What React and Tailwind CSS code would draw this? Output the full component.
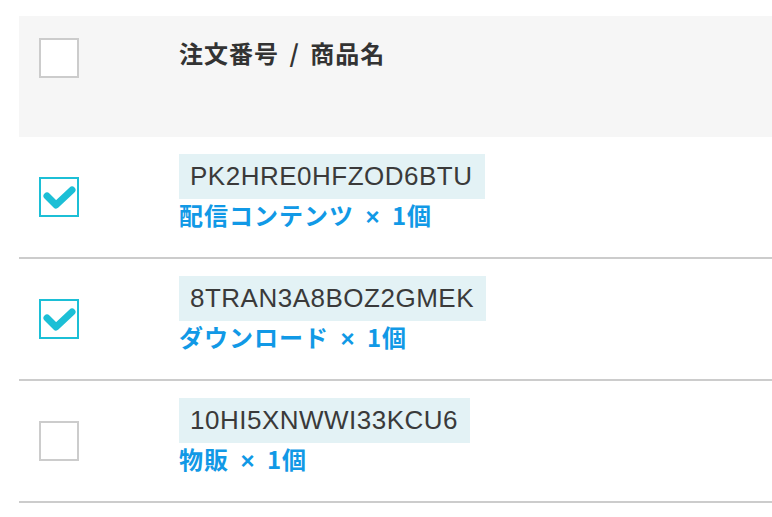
import React from 'react';

const rows = [
  { code: 'PK2HRE0HFZOD6BTU', name: '配信コンテンツ', qty: 1, checked: true },
  { code: '8TRAN3A8BOZ2GMEK', name: 'ダウンロード', qty: 1, checked: true },
  { code: '10HI5XNWWI33KCU6', name: '物販', qty: 1, checked: false },
];

const jp = { fontFamily: '"Noto Sans CJK JP", "Liberation Sans", sans-serif' };

const Checkbox = ({ checked }) => (
  <div
    className={`w-10 h-10 bg-white border-2 ${checked ? 'border-[#1cbfd6]' : 'border-[#cccccc]'}`}
  >
    {checked && (
      <svg width="36" height="36" viewBox="0 0 36 36" className="block">
        <polyline
          points="6,17 15,26 31,11"
          fill="none"
          stroke="#1cbfd6"
          strokeWidth="7"
          strokeLinecap="round"
          strokeLinejoin="round"
        />
      </svg>
    )}
  </div>
);

export default function App() {
  return (
    <div className="min-h-[517px] bg-white pt-4 pl-[19px] overflow-hidden">
      <div className="w-[800px]">
        <div className="flex h-[121px] bg-[#f6f6f6]">
          <div className="w-[160px] pl-5 pt-[22px]">
            <Checkbox checked={false} />
          </div>
          <div
            className="pt-[21px] text-[24px] leading-[32px] font-bold text-[#333333] tracking-[1px] [word-spacing:4px]"
            style={jp}
          >
            注文番号 / 商品名
          </div>
        </div>

        {rows.map(row => (
          <div key={row.code} className="flex h-[122px] border-b-2 border-[#cccccc]">
            <div className="w-[160px] pl-5 flex items-center">
              <Checkbox checked={row.checked} />
            </div>
            <div className="pt-[17px]">
              <div
                className="inline-block h-[45px] pl-[11px] pr-[12px] bg-[#e3f2f5] text-[26px] leading-[45px] tracking-[0.5px] text-[#3a3a3a]"
                style={{ fontFamily: '"Liberation Sans", sans-serif' }}
              >
                {row.code}
              </div>
              <div
                className="text-[24px] leading-[32px] font-bold text-[#1199e6] tracking-[1px] [word-spacing:5px]"
                style={jp}
              >
                {row.name}{' '}
                <span style={{ fontFamily: '"Liberation Sans", sans-serif' }}>×</span>{' '}
                {row.qty}個
              </div>
            </div>
          </div>
        ))}
      </div>
    </div>
  );
}
